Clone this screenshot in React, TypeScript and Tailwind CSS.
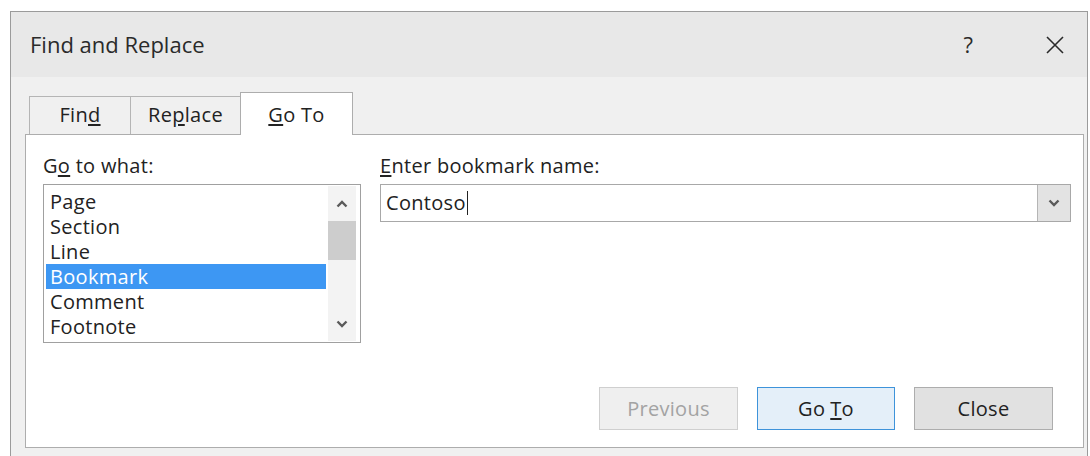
import { ReactNode } from "react";

const font = { fontFamily: '"Open Sans", "Noto Sans", sans-serif' };

function Chevron({ up = false, className = "" }: { up?: boolean; className?: string }) {
  return (
    <svg width="12" height="8" viewBox="0 0 12 8" className={className}>
      <polyline
        points={up ? "1.5,6.5 6,2 10.5,6.5" : "1.5,1.5 6,6 10.5,1.5"}
        fill="none"
        stroke="#5a5a5a"
        strokeWidth="2.4"
      />
    </svg>
  );
}

function Tab({ children, active = false, width }: { children: ReactNode; active?: boolean; width: string }) {
  if (active) {
    return (
      <div className={`relative z-10 -mb-px -ml-px h-[43px] ${width} border border-b-0 border-[#adadad] bg-white pt-[7px] text-center text-[20px] tracking-[0.3px] text-[#222]`}>
        {children}
      </div>
    );
  }
  return (
    <div className={`h-[38px] ${width} border border-b-0 border-[#b5b5b5] bg-[#f0f0f0] pt-[3px] text-center text-[20px] tracking-[0.3px] text-[#222] [&+&]:-ml-px`}>
      {children}
    </div>
  );
}

const items = ["Page", "Section", "Line", "Bookmark", "Comment", "Footnote"];

export default function App() {
  return (
    <div className="h-[456px] w-[1090px] overflow-hidden bg-white pl-[10px] pt-[11px]" style={font}>
      <div className="h-[460px] w-[1078px] border border-[#9b9b9b] bg-[#f0f0f0]">
        {/* title bar */}
        <div className="flex h-[65px] items-center bg-[#e8e8e8] pl-[19px]">
          <span className="text-[22px] text-[#2a2a2a]">Find and Replace</span>
          <span className="ml-auto mr-[72px] text-[22px] text-[#2a2a2a]">?</span>
          <svg width="20" height="20" viewBox="0 0 20 20" className="mr-[22px]">
            <path d="M2 2 L18 18 M18 2 L2 18" stroke="#2a2a2a" strokeWidth="1.6" />
          </svg>
        </div>

        <div className="pl-[14px] pr-[4px] pt-[14px]">
          {/* tabs */}
          <div className="flex h-[43px] items-end pl-[4px]">
            <Tab width="w-[102px]">
              Fin<span className="underline underline-offset-2">d</span>
            </Tab>
            <Tab width="w-[111px]">
              Re<span className="underline underline-offset-2">p</span>lace
            </Tab>
            <Tab active width="w-[113px]">
              <span className="underline underline-offset-2">G</span>o To
            </Tab>
          </div>

          {/* page */}
          <div className="flex h-[314px] w-[1059px] flex-col border border-[#adadad] bg-white text-[20px] tracking-[0.3px]">
            <div className="flex pt-[19px]">
              <div className="ml-[17px] w-[318px]">
                <div className="h-[24px] leading-[24px] text-[#222]">
                  G<span className="underline underline-offset-2">o</span> to what:
                </div>
                <div className="mt-[6px] flex h-[159px] border border-[#a0a0a0] bg-white">
                  <div className="flex-1 pl-[2px] pt-[4px]">
                    {items.map((it) => (
                      <div
                        key={it}
                        className={`h-[25px] pl-[4px] leading-[25px] ${
                          it === "Bookmark" ? "bg-[#3d97f3] text-white" : "text-[#222]"
                        }`}
                      >
                        {it}
                      </div>
                    ))}
                  </div>
                  {/* scrollbar */}
                  <div className="my-[1px] mr-[4px] ml-[2px] flex w-[28px] flex-col items-center bg-[#f3f3f3]">
                    <div className="flex h-[35px] items-center justify-center">
                      <Chevron up />
                    </div>
                    <div className="h-[39px] w-full bg-[#cdcdcd]" />
                    <div className="mt-auto flex h-[35px] items-center justify-center">
                      <Chevron />
                    </div>
                  </div>
                </div>
              </div>

              <div className="ml-[19px] mr-[12px] flex-1">
                <div className="h-[24px] leading-[24px] text-[#222]">
                  <span className="underline underline-offset-2">E</span>nter bookmark name:
                </div>
                <div className="mt-[6px] flex h-[38px] border border-[#a8a8a8] bg-white">
                  <div className="flex flex-1 items-center pl-[5px] text-[#222]">
                    Contoso
                    <span className="ml-[1px] h-[24px] w-[1.5px] bg-[#222]" />
                  </div>
                  <div className="flex w-[33px] items-center justify-center border-l border-[#b5b5b5] bg-[#e3e3e3]">
                    <Chevron />
                  </div>
                </div>
              </div>
            </div>

            {/* buttons */}
            <div className="mt-auto flex justify-end gap-[19px] pb-[17px] pr-[30px]">
              <div className="flex h-[43px] w-[139px] items-center justify-center border border-[#cfcfcf] bg-[#efefef] text-[#a3a3a3]">
                Previous
              </div>
              <div className="flex h-[43px] w-[138px] items-center justify-center border border-[#3e93da] bg-[#e4eff9] text-[#222]">
                Go <span className="ml-[5px] underline underline-offset-2">T</span>o
              </div>
              <div className="flex h-[43px] w-[139px] items-center justify-center border border-[#adadad] bg-[#e1e1e1] text-[#222]">
                Close
              </div>
            </div>
          </div>
        </div>
      </div>
    </div>
  );
}
